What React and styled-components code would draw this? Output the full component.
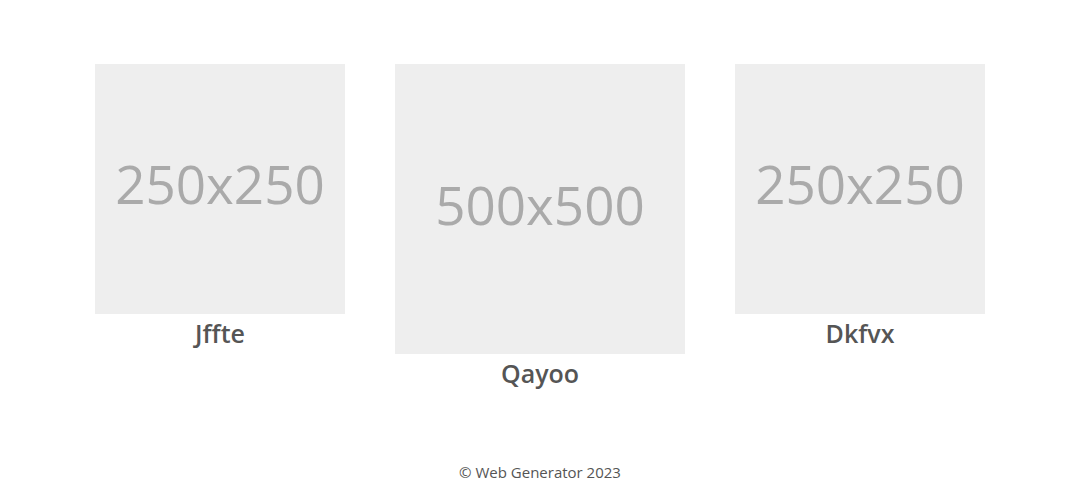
import React from 'react';
import styled, { createGlobalStyle } from 'styled-components';

const GlobalStyle = createGlobalStyle`
  body {
    margin: 0;
    background: #fff;
    font-family: 'Open Sans', 'Noto Sans', 'Liberation Sans', sans-serif;
  }
`;

const Page = styled.div`
  display: flex;
  flex-direction: column;
  align-items: center;
  padding-top: 64px;
`;

const Gallery = styled.div`
  display: flex;
  justify-content: center;
  align-items: flex-start;
  gap: 50px;
`;

const Card = styled.div`
  display: flex;
  flex-direction: column;
  align-items: center;
`;

const Placeholder = styled.div`
  width: ${props => props.size}px;
  height: ${props => props.size}px;
  background: #eeeeee;
  color: #aaaaaa;
  display: flex;
  align-items: center;
  justify-content: center;
  font-size: 53px;
  padding-bottom: ${props => (props.size > 250 ? 9 : 11)}px;
  box-sizing: border-box;
`;

const Name = styled.h3`
  margin: 0;
  font-size: 25px;
  line-height: 38px;
  font-weight: 600;
  color: #555555;
`;

const Footer = styled.footer`
  margin-top: 70px;
  font-size: 15px;
  color: #555555;
`;

const items = [
  { label: '250x250', size: 250, name: 'Jffte' },
  { label: '500x500', size: 290, name: 'Qayoo' },
  { label: '250x250', size: 250, name: 'Dkfvx' }
];

export default function App() {
  return (
    <>
      <GlobalStyle />
      <Page>
        <Gallery>
          {items.map(item => (
            <Card key={item.name}>
              <Placeholder size={item.size}>{item.label}</Placeholder>
              <Name>{item.name}</Name>
            </Card>
          ))}
        </Gallery>
        <Footer>© Web Generator 2023</Footer>
      </Page>
    </>
  );
}
